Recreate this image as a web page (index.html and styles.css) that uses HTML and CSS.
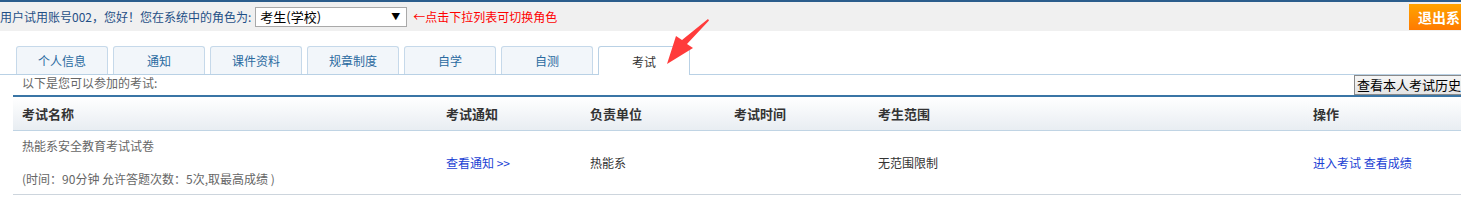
FILE: index.html
```html
<!DOCTYPE html>
<html lang="zh">
<head>
<meta charset="utf-8">
<title>考试</title>
<link rel="stylesheet" href="styles.css">
</head>
<body>
<div class="topbar">
  <span class="welcome">用户试用账号002，您好！您在系统中的角色为:</span>
  <div class="select"><span>考生(学校)</span><span class="caret">▼</span></div>
  <span class="hint">←点击下拉列表可切换角色</span>
  <div class="spacer"></div>
  <div class="logout">退出系</div>
</div>
<div class="tabs">
  <div class="tab">个人信息</div>
  <div class="tab">通知</div>
  <div class="tab">课件资料</div>
  <div class="tab">规章制度</div>
  <div class="tab">自学</div>
  <div class="tab">自测</div>
  <div class="tab active">考试</div>
</div>
<div class="subbar">
  <span class="subtitle">以下是您可以参加的考试:</span>
  <div class="histbtn">查看本人考试历史</div>
</div>
<table class="exams">
  <thead>
    <tr>
      <th class="c1">考试名称</th>
      <th class="c2">考试通知</th>
      <th class="c3">负责单位</th>
      <th class="c4">考试时间</th>
      <th class="c5">考生范围</th>
      <th class="c6">操作</th>
    </tr>
  </thead>
  <tbody>
    <tr>
      <td class="c1">
        <div class="name">热能系安全教育考试试卷</div>
        <div class="meta">(时间：90分钟 允许答题次数：5次,取最高成绩 )</div>
      </td>
      <td class="c2"><a class="link">查看通知 &gt;&gt;</a></td>
      <td class="c3">热能系</td>
      <td class="c4"></td>
      <td class="c5">无范围限制</td>
      <td class="c6"><a class="link">进入考试</a> <a class="link">查看成绩</a></td>
    </tr>
  </tbody>
</table>
<svg class="pointer" width="60" height="50" viewBox="0 0 60 50">
  <path d="M46 0 L47 1.5 L25 25 L31 29 L5 45 L14 17 L20 21 Z" fill="#ff3b3b"/>
</svg>
</body>
</html>
```
FILE: styles.css
```css
html, body {
  margin: 0;
  padding: 0;
  overflow: hidden;
  background: #fff;
  font-family: "Noto Sans CJK SC", "Liberation Sans", sans-serif;
  font-size: 12px;
}
body {
  width: 1461px;
  position: relative;
}
.topbar {
  display: flex;
  align-items: center;
  height: 29px;
  border-top: 2px solid #2b5d8c;
  background: #f0f0f0;
}
.welcome {
  color: #1f4f86;
  margin-right: 4px;
  white-space: nowrap;
}
.select {
  box-sizing: border-box;
  width: 152px;
  height: 20px;
  border: 1px solid #a9a9a9;
  background: #fff;
  display: flex;
  align-items: center;
  justify-content: space-between;
  padding: 0 6px 0 4px;
  font-size: 13px;
  color: #000;
}
.caret {
  font-size: 9px;
}
.hint {
  color: #ff0000;
  margin-left: 6px;
  white-space: nowrap;
}
.spacer {
  flex: 1;
}
.logout {
  align-self: flex-start;
  margin-top: 2px;
  height: 26px;
  width: 52px;
  box-sizing: border-box;
  padding-left: 9px;
  line-height: 26px;
  background: linear-gradient(#ffa400, #ff7a00);
  color: #fff;
  font-weight: bold;
  font-size: 14px;
  white-space: nowrap;
  overflow: hidden;
}
.tabs {
  display: flex;
  gap: 5px;
  margin-top: 15px;
  padding-left: 16px;
  height: 28px;
  border-bottom: 1px solid #b9d1e5;
}
.tab {
  box-sizing: border-box;
  width: 92px;
  height: 28px;
  border: 1px solid #c6d9ea;
  border-bottom: none;
  border-radius: 3px 3px 0 0;
  background: #f2f6fa;
  color: #2a6aa0;
  display: flex;
  align-items: center;
  justify-content: center;
}
.tab.active {
  height: 29px;
  background: #fff;
  color: #333;
  border-color: #b9d1e5;
  margin-bottom: -1px;
}
.subbar {
  display: flex;
  align-items: center;
  justify-content: space-between;
  height: 20px;
  padding-left: 22px;
}
.subtitle {
  color: #666;
  margin-top: -6px;
}
.histbtn {
  box-sizing: border-box;
  height: 20px;
  width: 107px;
  border: 1px solid #8a8a8a;
  border-right: none;
  background: linear-gradient(#f6f6f6, #e4e4e4);
  color: #000;
  font-size: 13px;
  line-height: 18px;
  padding-left: 2px;
  white-space: nowrap;
  overflow: hidden;
}
.exams {
  margin-left: 13px;
  width: 1507px;
  border-collapse: collapse;
  border-top: 2px solid #3a75a5;
  table-layout: fixed;
}
.exams th {
  height: 33px;
  padding: 0 0 0 9px;
  text-align: left;
  font-size: 13px;
  font-weight: bold;
  color: #333;
  background: linear-gradient(#ffffff, #e8edf2);
  border-bottom: 1px solid #c0d4e4;
}
.exams td {
  height: 63px;
  padding: 0 0 0 9px;
  color: #333;
  border-bottom: 1px solid #cdd5dd;
  vertical-align: middle;
}
.c1 { width: 415px; }
.c2 { width: 135px; }
.c3 { width: 135px; }
.c4 { width: 135px; }
.c5 { width: 426px; }
.c6 { width: 252px; }
.exams td.c1 {
  color: #666;
}
.name {
  line-height: 18px;
}
.meta {
  line-height: 18px;
  margin-top: 15px;
}
.link {
  color: #1a3fd4;
  text-decoration: none;
}
.pointer {
  position: absolute;
  left: 662px;
  top: 19px;
}
```
